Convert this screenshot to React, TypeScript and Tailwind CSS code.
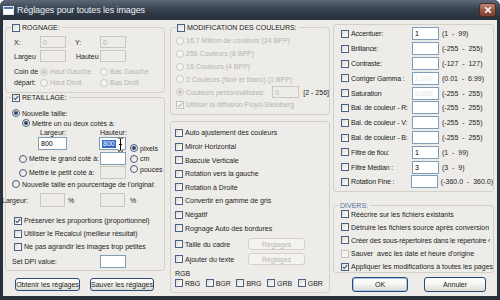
import type { ReactNode } from 'react'

const BODY = 'bg-[#edece8]'

function Check({ checked = false, disabled = false }: { checked?: boolean; disabled?: boolean }) {
  return (
    <span
      className={`relative inline-block w-[8px] h-[8px] shrink-0 border ${
        disabled ? 'border-[#c4c3bc] bg-[#f4f4f2]' : 'border-[#4a6184] bg-gradient-to-br from-[#dcdcd6] to-white'
      }`}
    >
      {checked && (
        <svg viewBox="0 0 8 8" className="absolute inset-0 w-[6px] h-[6px]">
          <path
            d="M1 4 L3 6 L7 1.5"
            fill="none"
            stroke={disabled ? '#b8b7b0' : '#2b4670'}
            strokeWidth="1.4"
          />
        </svg>
      )}
    </span>
  )
}

function Radio({ checked = false, disabled = false }: { checked?: boolean; disabled?: boolean }) {
  return (
    <span
      className={`inline-flex items-center justify-center w-[8px] h-[8px] shrink-0 rounded-full border ${
        disabled ? 'border-[#cac9c2] bg-[#f4f4f2]' : 'border-[#4a6184] bg-gradient-to-br from-[#dcdcd6] to-white'
      }`}
    >
      {checked && <span className={`w-[4px] h-[4px] rounded-full ${disabled ? 'bg-[#c4c3bc]' : 'bg-[#33486a]'}`} />}
    </span>
  )
}

function Field({
  value = '',
  disabled = false,
  className = '',
  children,
}: {
  value?: string
  disabled?: boolean
  className?: string
  children?: ReactNode
}) {
  return (
    <div
      className={`relative flex items-center shrink-0 border px-[2px] ${
        disabled ? `border-[#cac8bd] ${BODY} text-[#b5b4ad]` : 'border-[#7f9db9] bg-white text-black'
      } ${className}`}
    >
      {children ?? value}
    </div>
  )
}

function Btn({ label, className = '', disabled = false, focus = false }: { label: string; className?: string; disabled?: boolean; focus?: boolean }) {
  return (
    <div
      className={`flex items-center justify-center shrink-0 rounded-[3px] border ${
        disabled
          ? 'border-[#d4d2c8] bg-[#f4f3ef] text-[#b9b8b0]'
          : 'border-[#2a4a78] bg-gradient-to-b from-white via-[#f4f4f0] to-[#dcdbd2] text-[#1a1a1a]'
      } ${focus ? 'shadow-[inset_0_0_0_1px_#a9c3ea]' : ''} ${className}`}
    >
      {label}
    </div>
  )
}

function Group({ title, className = '', children }: { title?: ReactNode; className?: string; children: ReactNode }) {
  return (
    <div className={`relative shrink-0 border border-[#d3d1c7] rounded-[3px] ${className}`}>
      {title && (
        <div className={`absolute -top-[5px] left-[5px] h-[9px] pr-[2px] pl-[1px] flex items-center gap-[2px] ${BODY}`}>
          {title}
        </div>
      )}
      {children}
    </div>
  )
}

function CRow({ label, checked, disabled, className = '' }: { label: string; checked?: boolean; disabled?: boolean; className?: string }) {
  return (
    <div className={`flex items-center gap-[2px] whitespace-nowrap ${className}`}>
      <Check checked={checked} disabled={disabled} />
      <span className={disabled ? 'text-[#b5b4ad]' : ''}>{label}</span>
    </div>
  )
}

function RRow({ label, checked, disabled, className = '' }: { label: string; checked?: boolean; disabled?: boolean; className?: string }) {
  return (
    <div className={`flex items-center gap-[2px] whitespace-nowrap ${className}`}>
      <Radio checked={checked} disabled={disabled} />
      <span className={disabled ? 'text-[#b5b4ad]' : ''}>{label}</span>
    </div>
  )
}

const ADJUST = [
  { label: 'Accentuer:', value: '1', range: '(1  -  99)' },
  { label: 'Brillance:', value: '', range: '(-255  -  255)' },
  { label: 'Contraste:', value: '', range: '(-127  -  127)' },
  { label: 'Corriger Gamma :', value: '1.000', range: '(0.01  -  6.99)', faint: true },
  { label: 'Saturation', value: '0.000', range: '(-255  -  255)', faint: true },
  { label: 'Bal. de couleur - R:', value: '', range: '(-255  -  255)' },
  { label: 'Bal. de couleur - V:', value: '', range: '(-255  -  255)' },
  { label: 'Bal. de couleur - B:', value: '', range: '(-255  -  255)' },
  { label: 'Filtre de flou:', value: '1', range: '(1  -  99)' },
  { label: 'Filtre Median :', value: '3', range: '(3  -  9)' },
  { label: 'Rotation Fine :', value: '', range: '(-360.0  -  360.0)' },
]

const TOGGLES = [
  'Auto ajustement des couleurs',
  'Miroir Horizontal',
  'Bascule Verticale',
  'Rotation vers la gauche',
  'Rotation à Droite',
  'Convertir en gamme de gris',
  'Négatif',
  'Rognage Auto des bordures',
]

export default function App() {
  return (
    <div className="w-[500px] h-[300px] flex flex-col bg-[#27303b] rounded-t-[6px] font-['Liberation_Sans',Arial,sans-serif] text-[7px] leading-none text-[#1c1c1c]">
      {/* Title bar */}
      <div className="h-[20px] shrink-0 flex items-center px-[3px] rounded-t-[6px] bg-gradient-to-b from-[#5d6977] via-[#35404d] to-[#26303b]">
        <div className="w-[11px] h-[9px] border border-[#dfe6ee] bg-white shadow-[inset_0_2px_0_#4b79b8]" />
        <span className="ml-[3px] text-[9px] tracking-[-0.1px] text-[#eef1f4]">Réglages pour toutes les images</span>
        <div className="ml-auto mr-[1px] w-[17px] h-[14px] rounded-[3px] border border-[#4a2a22] bg-gradient-to-b from-[#c08878] via-[#9a5748] to-[#7e3f31] flex items-center justify-center">
          <svg viewBox="0 0 10 10" className="w-[8px] h-[8px]">
            <path d="M1.5 1.5 L8.5 8.5 M8.5 1.5 L1.5 8.5" stroke="white" strokeWidth="2" />
          </svg>
        </div>
      </div>

      {/* Client area */}
      <div className={`mx-[3px] mb-[4px] flex-1 flex ${BODY}`}>
        {/* Left column */}
        <div className="w-[164px] shrink-0 flex flex-col pl-[2px]">
          <Group
            className="mt-[7px] w-[160px] h-[66px]"
            title={
              <>
                <Check />
                <span>ROGNAGE:</span>
              </>
            }
          >
            <div className="mt-[8px] pl-[8px] h-[12px] flex items-center">
              <span className="w-[26px]">X:</span>
              <Field disabled value="0" className="w-[26px] h-[12px]" />
              <span className="w-[9px]" />
              <span className="w-[25px]">Y:</span>
              <Field disabled value="0" className="w-[26px] h-[12px]" />
            </div>
            <div className="mt-[2px] pl-[8px] h-[12px] flex items-center">
              <span className="w-[26px] whitespace-nowrap">Largeu</span>
              <Field disabled className="w-[26px] h-[12px]" />
              <span className="w-[10px]" />
              <span className="w-[24px] whitespace-nowrap">Hauteu</span>
              <Field disabled className="w-[26px] h-[12px]" />
            </div>
            <div className="mt-[4px] pl-[8px] flex leading-[11px]">
              <span className="w-[26px]">
                Coin de
                <br />
                départ:
              </span>
              <div className="grid grid-cols-[60px_60px]">
                <RRow label="Haut Gauche" checked disabled className="h-[11px]" />
                <RRow label="Bas Gauche" disabled className="h-[11px]" />
                <RRow label="Haut Droit" disabled className="h-[11px]" />
                <RRow label="Bas Droit" disabled className="h-[11px]" />
              </div>
            </div>
          </Group>

          <Group
            className="mt-[4px] w-[160px] h-[174px]"
            title={
              <>
                <Check checked />
                <span>RETAILLAGE:</span>
              </>
            }
          >
            <RRow label="Nouvelle taille:" checked className="mt-[10px] h-[10px] pl-[6px]" />
            <RRow label="Mettre un ou deux cotés à:" checked className="h-[10px] pl-[16px]" />
            <div className="h-[9px] flex items-center pl-[34px]">
              <span className="w-[60px]">Largeur:</span>
              <span>Hauteur:</span>
            </div>
            <div className="flex">
              <div className="w-[122px] flex flex-col">
                <div className="h-[13px] flex pl-[32px]">
                  <Field value="800" className="w-[29px] h-[13px]" />
                  <Field className="ml-[32px] w-[27px] h-[13px]">
                    <span className="bg-[#316ac5] text-white px-[1px] leading-[8px]">800</span>
                    <svg viewBox="0 0 7 15" className="absolute left-[17px] -top-[1px] w-[7px] h-[15px]">
                      <path d="M1 1 H3 M4 1 H6 M3.5 1.5 V13.5 M1 14 H3 M4 14 H6 M2 7.5 H5" stroke="white" strokeWidth="2.6" fill="none" />
                      <path d="M1 1 H3 M4 1 H6 M3.5 1.5 V13.5 M1 14 H3 M4 14 H6 M2 7.5 H5" stroke="black" strokeWidth="1" fill="none" />
                    </svg>
                  </Field>
                </div>
                <div className="mt-[2px] h-[13px] flex items-center pl-[13px]">
                  <div className="w-[81px] flex items-center gap-[2px] whitespace-nowrap">
                    <Radio />
                    <span>Mettre le grand coté à:</span>
                  </div>
                  <Field className="w-[26px] h-[13px]" />
                </div>
                <div className="mt-[1px] h-[13px] flex items-center pl-[13px]">
                  <div className="w-[81px] flex items-center gap-[2px] whitespace-nowrap">
                    <Radio />
                    <span>Mettre le petit coté à:</span>
                  </div>
                  <Field disabled className="w-[26px] h-[13px]" />
                </div>
              </div>
              <div className="mt-[6px] ml-[2px] flex flex-col">
                <RRow label="pixels" checked className="h-[10.5px]" />
                <RRow label="cm" className="h-[10.5px]" />
                <RRow label="pouces" className="h-[10.5px]" />
              </div>
            </div>
            <RRow label="Nouvelle taille en pourcentage de l'original:" className="h-[10px] pl-[6px]" />
            <div className="mt-[4px] h-[14px] flex items-center -ml-[4px]">
              <span className="w-[38px]">Largeur:</span>
              <Field disabled className="w-[25px] h-[14px]" />
              <span className="w-[35px] pl-[3px]">%</span>
              <Field disabled className="w-[25px] h-[14px]" />
              <span className="pl-[5px]">%</span>
            </div>
            <div className="mt-[7px] pl-[8px] flex flex-col">
              <CRow label="Préserver les proportions (proportionnel)" checked className="h-[13px]" />
              <CRow label="Utiliser le Recalcul (meilleur résultat)" className="h-[13px]" />
              <CRow label="Ne pas agrandir les images trop petites" className="h-[13px]" />
            </div>
            <div className="mt-[2px] h-[13px] flex items-center pl-[6px]">
              <span className="w-[88px]">Set DPI value:</span>
              <Field className="w-[26px] h-[13px]" />
            </div>
          </Group>

          <div className="mt-[7px] flex pl-[10px]">
            <Btn label="Obtenir les réglages" className="w-[65px] h-[13px]" />
            <Btn label="Sauver les réglages" className="ml-[10px] w-[64px] h-[13px]" />
          </div>
        </div>

        {/* Middle column */}
        <div className="w-[165px] shrink-0 flex flex-col pl-[3px]">
          <Group
            className="mt-[7px] w-[160px] h-[88px]"
            title={
              <>
                <Check />
                <span>MODIFICATION DES COULEURS:</span>
              </>
            }
          >
            <div className="mt-[6.6px] pl-[5px] flex flex-col">
              <RRow label="16,7 Million de couleurs (24 BPP)" disabled className="h-[12.8px]" />
              <RRow label="256 Couleurs (8 BPP)" disabled className="h-[12.8px]" />
              <RRow label="16 Couleurs (4 BPP)" disabled className="h-[12.8px]" />
              <RRow label="2 Couleurs (Noir et blanc) (1 BPP)" disabled className="h-[12.8px]" />
              <div className="h-[12.8px] flex items-center gap-[2px] whitespace-nowrap">
                <Radio checked disabled />
                <span className="w-[85px] text-[#b5b4ad]">Couleurs personnalisées:</span>
                <Field disabled value="0" className="w-[27px] h-[12px]" />
                <span className="ml-[2px]">[2 - 256]</span>
              </div>
              <CRow label="Utiliser la diffusion Floyd-Steinberg" checked disabled className="h-[12.8px]" />
            </div>
          </Group>

          <Group className="mt-[6px] w-[160px] h-[172px]">
            <div className="mt-[4.2px] pl-[4px] flex flex-col">
              {TOGGLES.map((t) => (
                <CRow key={t} label={t} className="h-[13.6px]" />
              ))}
              <div className="mt-[2.7px] h-[13px] flex items-center">
                <div className="w-[73px] flex items-center gap-[2px] whitespace-nowrap">
                  <Check />
                  <span>Taille du cadre</span>
                </div>
                <Btn label="Réglages" disabled className="w-[57px] h-[12px]" />
              </div>
              <div className="mt-[2px] h-[13px] flex items-center">
                <div className="w-[73px] flex items-center gap-[2px] whitespace-nowrap">
                  <Check />
                  <span>Ajouter du texte</span>
                </div>
                <Btn label="Réglages" disabled className="w-[57px] h-[12px]" />
              </div>
              <div className="mt-[2.5px] h-[10px] flex items-center">RGB</div>
              <div className="h-[10px] flex">
                {['RBG', 'BGR', 'BRG', 'GRB', 'GBR'].map((c) => (
                  <CRow key={c} label={c} className="w-[30.7px] h-[10px]" />
                ))}
              </div>
            </div>
          </Group>
        </div>

        {/* Right column */}
        <div className="w-[165px] shrink-0 flex flex-col pl-[1px]">
          <Group className="mt-[4px] w-[161px] h-[168px]">
            <div className="mt-[1.6px] pl-[7px] flex flex-col">
              {ADJUST.map((a) => (
                <div key={a.label} className="h-[14.8px] flex items-center whitespace-nowrap">
                  <Check />
                  <span className="ml-[2px] w-[61px] tracking-[-0.15px]">{a.label}</span>
                  <Field className="w-[27px] h-[13px]">
                    <span className={a.faint ? 'text-[#e2e2de]' : ''}>{a.value}</span>
                  </Field>
                  <span className="ml-[3px] whitespace-pre">{a.range}</span>
                </div>
              ))}
            </div>
          </Group>

          <Group className="mt-[13px] w-[161px] h-[68px]" title={<span className="text-[#56719c]">DIVERS:</span>}>
            <div className="mt-[1.5px] pl-[7px] flex flex-col">
              <CRow label="Réécrire sur les fichiers existants" className="h-[13.2px]" />
              <CRow label="Détruire les fichiers source après conversion" className="h-[13.2px]" />
              <div className="h-[13.2px] flex items-center gap-[2px] whitespace-nowrap tracking-[-0.1px]">
                <Check />
                <span>Créer des sous-répertoires dans le répertoire ‹</span>
              </div>
              <div className="h-[13.2px] flex items-center gap-[2px] whitespace-pre">
                <Check disabled />
                <span>Sauver  avec les date et heure d'origine</span>
              </div>
              <CRow label="Appliquer les modifications à toutes les pages" checked className="h-[13.2px]" />
            </div>
          </Group>

          <div className="mt-[4px] flex pl-[19px]">
            <Btn label="OK" focus className="w-[56px] h-[15px]" />
            <Btn label="Annuler" className="ml-[16px] w-[62px] h-[15px]" />
          </div>
        </div>
      </div>
    </div>
  )
}
